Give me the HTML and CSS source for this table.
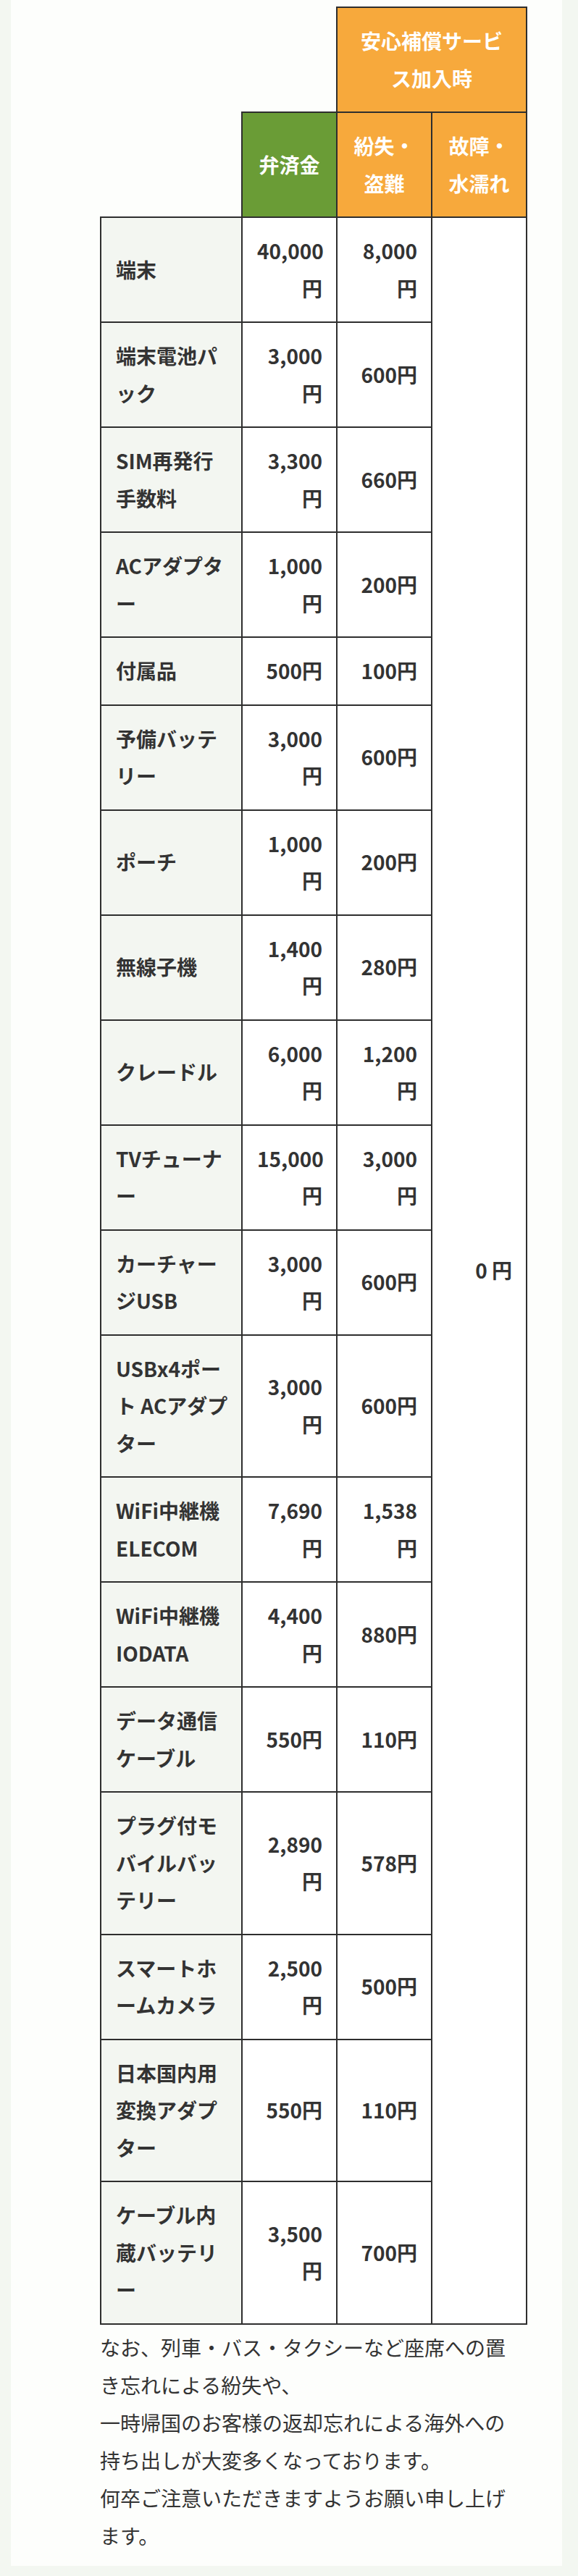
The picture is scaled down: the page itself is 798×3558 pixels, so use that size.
FILE: index.html
```html
<!DOCTYPE html>
<html lang="ja">
<head>
<meta charset="utf-8">
<title>料金表</title>
<link rel="stylesheet" href="styles.css">
</head>
<body>
<div class="page">
  <div class="content">
    <table class="fee">
      <colgroup>
        <col class="c-name"><col class="c-num"><col class="c-num"><col class="c-num">
      </colgroup>
      <thead>
        <tr>
          <th class="blank" colspan="2"></th>
          <th class="orange wide" colspan="2">安心補償サービス加入時</th>
        </tr>
        <tr>
          <th class="blank"></th>
          <th class="green">弁済金</th>
          <th class="orange">紛失・盗難</th>
          <th class="orange">故障・水濡れ</th>
        </tr>
      </thead>
      <tbody>
        <tr><th>端末</th><td>40,000円</td><td>8,000円</td><td class="zero" rowspan="19">0 円</td></tr>
        <tr><th>端末電池パック</th><td>3,000円</td><td>600円</td></tr>
        <tr><th>SIM再発行手数料</th><td>3,300円</td><td>660円</td></tr>
        <tr><th>ACアダプター</th><td>1,000円</td><td>200円</td></tr>
        <tr><th>付属品</th><td>500円</td><td>100円</td></tr>
        <tr><th>予備バッテリー</th><td>3,000円</td><td>600円</td></tr>
        <tr><th>ポーチ</th><td>1,000円</td><td>200円</td></tr>
        <tr><th>無線子機</th><td>1,400円</td><td>280円</td></tr>
        <tr><th>クレードル</th><td>6,000円</td><td>1,200円</td></tr>
        <tr><th>TVチューナー</th><td>15,000円</td><td>3,000円</td></tr>
        <tr><th>カーチャージUSB</th><td>3,000円</td><td>600円</td></tr>
        <tr><th>USBx4ポート ACアダプター</th><td>3,000円</td><td>600円</td></tr>
        <tr><th>WiFi中継機 ELECOM</th><td>7,690円</td><td>1,538円</td></tr>
        <tr><th>WiFi中継機 IODATA</th><td>4,400円</td><td>880円</td></tr>
        <tr><th>データ通信ケーブル</th><td>550円</td><td>110円</td></tr>
        <tr><th>プラグ付モバイルバッテリー</th><td>2,890円</td><td>578円</td></tr>
        <tr><th>スマートホームカメラ</th><td>2,500円</td><td>500円</td></tr>
        <tr><th>日本国内用変換アダプター</th><td>550円</td><td>110円</td></tr>
        <tr><th>ケーブル内蔵バッテリー</th><td>3,500円</td><td>700円</td></tr>
      </tbody>
    </table>
    <p class="note">なお、列車・バス・タクシーなど座席への置き忘れによる紛失や、<br>一時帰国のお客様の返却忘れによる海外への持ち出しが大変多くなっております。<br>何卒ご注意いただきますようお願い申し上げます。</p>
  </div>
</div>
</body>
</html>
```
FILE: styles.css
```css
html, body {
  margin: 0;
  padding: 0;
  background: #f3f7f1;
}
body {
  font-family: "Noto Sans CJK JP", "Noto Sans", sans-serif;
  color: #333;
}
.page {
  margin: 0 22px 0 15px;
  background: #fdfefc;
  padding: 9px 0 16px 123px;
}
.content {
  width: 588px;
}
.fee {
  width: 588px;
  table-layout: fixed;
  border-collapse: collapse;
  font-size: 28px;
  line-height: 51.5px;
  font-weight: 700;
}
.c-name { width: 195px; }
.c-num { width: 131px; }
.fee th, .fee td {
  border: 2px solid #2e2e2e;
  padding: 20px 19px 20px 20px;
  vertical-align: middle;
}
.fee thead th {
  color: #fff;
  text-align: center;
  font-weight: 700;
  padding: 20px 18px;
}
.fee thead th.wide {
  padding: 20px 22px;
}
.fee thead th.blank {
  border: none;
  background: transparent;
}
.orange { background: #f7a93c; }
.green { background: #6a9c36; }
.fee tbody th {
  background: #f3f6f1;
  text-align: left;
  font-weight: 700;
  padding: 20px 12px 20px 20px;
}
.fee tbody td {
  text-align: right;
  background: #fff;
}
.note {
  width: 572px;
  margin: 5px 0 0;
  font-size: 28px;
  line-height: 52px;
  font-weight: 400;
  color: #333;
}
```
